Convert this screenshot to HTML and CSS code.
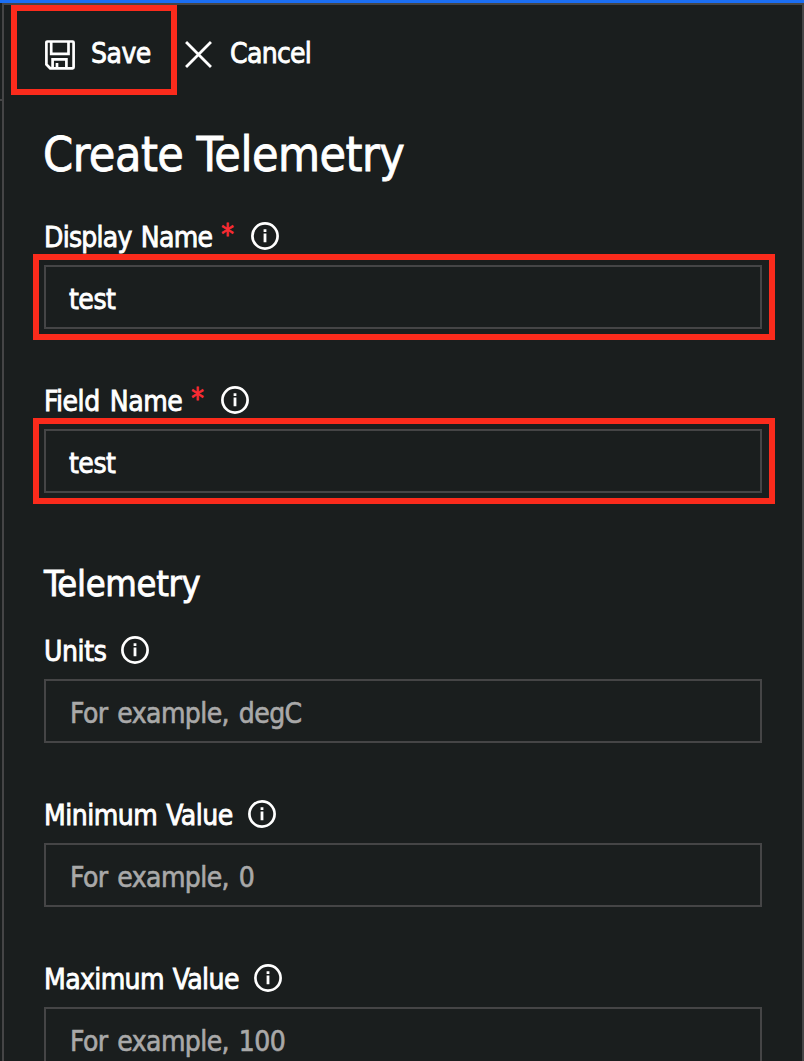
FILE: index.html
```html
<!DOCTYPE html>
<html lang="en">
<head>
<meta charset="utf-8">
<title>Create Telemetry</title>
<link rel="stylesheet" href="styles.css">
</head>
<body>
<svg width="0" height="0" class="defs"><symbol id="info" viewBox="0 0 28 28"><circle cx="14" cy="14" r="12.6" fill="none" stroke="currentColor" stroke-width="2.7"/><path d="M14 7.2v2.8M14 11.4v8.8" fill="none" stroke="currentColor" stroke-width="2.8"/></symbol></svg>
<div class="app">
  <div class="rail"></div>
  <main class="panel">
    <header class="toolbar">
      <button class="action save"><svg class="disk" viewBox="0 0 30 30"><path d="M2.2 1.5h25.4q1 0 1 1v24.8q0 1-1 1H5.2l-3.8-3.8V2.3q0-.8.8-.8zM6.2 1.5v12.3h17.3V1.5M7.6 28v-8.6h13.8V28M12 28.3V23" /></svg><span>Save</span></button>
      <button class="action cancel"><svg class="cross" viewBox="0 0 26 26"><path d="M1 1l24 24M25 1L1 25"/></svg><span>Cancel</span></button>
    </header>
    <h1 class="title"><span>Create Telemetry</span></h1>
    <section class="field marked">
      <label class="label"><span class="dn">Display Name</span><b class="star">*</b><svg class="info"><use href="#info"/></svg></label>
      <div class="input"><span class="value">test</span></div>
    </section>
    <section class="field marked">
      <label class="label"><span class="fn">Field Name</span><b class="star">*</b><svg class="info"><use href="#info"/></svg></label>
      <div class="input"><span class="value">test</span></div>
    </section>
    <h2 class="subtitle"><span>Telemetry</span></h2>
    <section class="field">
      <label class="label"><span class="un">Units</span><svg class="info"><use href="#info"/></svg></label>
      <div class="input"><span class="hint">For example, degC</span></div>
    </section>
    <section class="field">
      <label class="label"><span class="mn">Minimum Value</span><svg class="info"><use href="#info"/></svg></label>
      <div class="input"><span class="hint">For example, 0</span></div>
    </section>
    <section class="field">
      <label class="label"><span class="mx">Maximum Value</span><svg class="info"><use href="#info"/></svg></label>
      <div class="input"><span class="hint">For example, 100</span></div>
    </section>
  </main>
</div>
</body>
</html>
```
FILE: styles.css
```css
* { box-sizing: border-box; margin: 0; padding: 0; }
body { height: 1061px; overflow: hidden; background: #1a1e1e; color: #fff; font-family: "DejaVu Sans Condensed", "DejaVu Sans", sans-serif; font-stretch: condensed; font-size: 28px; letter-spacing: -0.5px; -webkit-text-stroke: 0.8px currentColor; }
.defs { display: block; }
.app { display: flex; height: 1061px; border-top: 3px solid #1b6ef3; overflow: hidden; }
.rail { width: 2px; height: 98px; border-bottom: 2px solid #454546; }
.panel { width: 802px; height: 1058px; border: 2px solid #454546; border-bottom: 0; overflow: hidden; }
.toolbar { display: flex; height: 90px; padding-left: 7px; }
.action { display: flex; align-items: center; height: 90px; background: none; border: 0; color: inherit; font: inherit; letter-spacing: inherit; }
.action span { line-height: 40px; margin-top: 7px; }
.action svg { flex: none; fill: none; stroke: currentColor; stroke-width: 2.7; }
.save { width: 166px; border: 6px solid #fb2b1c; padding-left: 28px; }
.disk { width: 30px; height: 30px; margin-top: 9px; margin-right: 16px; }
.cancel { padding-left: 8px; letter-spacing: -0.7px; }
.cross { width: 27px; height: 27px; margin-top: 9px; margin-right: 18px; }
.title { height: 114px; padding: 29px 0 0 39px; font-size: 48px; line-height: 60px; font-weight: 400; }
.title span, .subtitle span { display: inline-block; white-space: nowrap; }
.field { height: 164px; padding: 8px 38px 0 40px; }
.label { display: flex; height: 48px; line-height: 42px; white-space: nowrap; }
.dn { letter-spacing: -0.75px; word-spacing: 2px; }
.fn { letter-spacing: -0.45px; word-spacing: 2.5px; }
.un { letter-spacing: -0.4px; }
.mn, .mx { letter-spacing: -0.6px; word-spacing: 1.5px; }
.mn { letter-spacing: -0.5px; }
.star { width: 15px; margin-left: 9px; color: #fb2b33; font-weight: 400; line-height: 36px; }
.info { width: 28px; height: 28px; margin: 5px 0 0 15px; overflow: visible; }
.input { position: relative; width: 718px; height: 64px; border: 2px solid #454546; padding-left: 23px; line-height: 66px; white-space: nowrap; }
.marked .input::after { content: ""; position: absolute; inset: -13px -15px -13px -13px; border: 6px solid #fb2b1c; }
.hint { margin-left: 1px; color: #a9a9a9; letter-spacing: -0.6px; word-spacing: 2.5px; -webkit-text-stroke-width: 0.6px; }
.subtitle { height: 86px; padding: 22px 0 0 40px; font-size: 36px; line-height: 50px; font-weight: 400; letter-spacing: -0.3px; }
```
